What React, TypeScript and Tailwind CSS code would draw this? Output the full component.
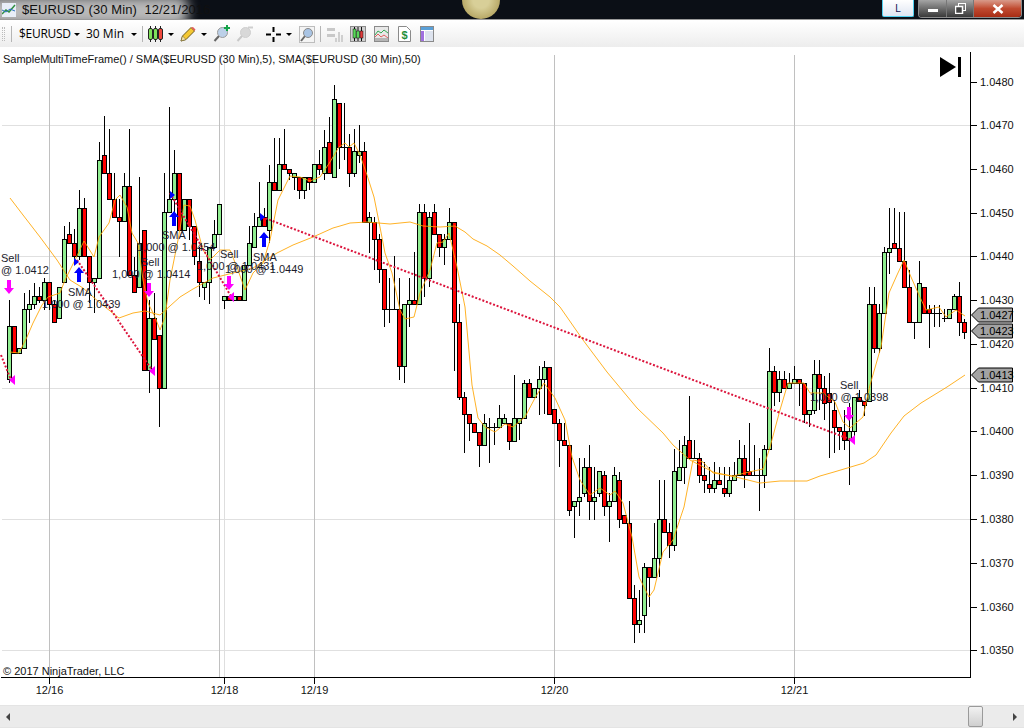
import React from "react";

type Bar = [string, number, number, number, number];

// c, body top, body bottom, high, low (all in page pixels)
const bars: Bar[] = [
  ["g",326,379,300,383],["r",326,353,326,353],["g",348,353,348,353],["g",309,348,293,348],["g",304,309,290,323],
  ["g",296,304,283,309],["r",296,300,287,303],["g",282,300,278,310],["r",282,304,282,310],["r",304,322,300,322],
  ["g",287,318,287,318],["g",239,282,226,282],["r",234,243,222,243],["r",243,256,229,263],["g",208,256,190,260],
  ["r",208,256,198,256],["r",256,282,256,303],["g",278,282,278,313],["g",160,278,142,278],["r",155,173,116,173],
  ["r",173,199,129,199],["r",199,217,173,217],["r",217,221,199,257],["g",186,221,173,221],["r",186,275,129,275],
  ["r",275,292,257,292],["g",243,287,177,287],["r",230,370,230,370],["g",318,370,300,393],["r",318,339,293,339],
  ["r",335,388,335,427],["g",212,388,173,388],["g",199,212,107,212],["g",173,199,150,212],["r",173,230,173,230],
  ["g",199,230,199,230],["r",199,226,199,240],["r",226,256,226,265],["r",261,282,247,297],["g",282,287,282,300],
  ["g",247,282,247,304],["g",234,247,220,247],["g",204,234,204,234],["g",296,300,296,309],["r",296,300,296,300],
  ["g",296,300,296,300],["r",296,300,296,300],["g",265,300,265,300],["g",243,265,226,265],["g",226,247,213,247],
  ["g",217,226,182,226],["r",217,226,208,226],["g",182,230,165,243],["r",182,190,138,190],["g",164,190,138,190],
  ["r",164,169,129,169],["r",169,173,169,180],["g",173,177,173,190],["r",177,190,177,199],["g",177,190,177,199],
  ["r",177,182,177,190],["g",164,182,164,182],["r",164,169,150,175],["g",147,173,130,180],["r",142,173,117,173],
  ["g",99,177,85,177],["r",103,147,103,169],["d",147,147,103,160],["r",147,173,134,187],["g",151,173,129,177],
  ["g",151,155,125,163],["r",151,222,142,222],["g",217,222,212,253],["r",222,239,217,270],["r",239,269,234,283],
  ["r",269,309,269,327],["d",309,309,278,323],["d",309,309,256,309],["r",309,366,278,380],["g",304,366,304,383],
  ["g",300,304,278,327],["r",300,304,252,304],["g",212,304,204,304],["r",212,278,204,297],["g",217,278,212,287],
  ["r",212,234,204,234],["r",234,247,234,257],["g",239,247,234,265],["g",222,239,208,239],["r",222,322,222,371],
  ["r",322,397,304,400],["r",397,414,392,453],["r",414,423,414,441],["r",423,432,423,432],["r",432,445,432,467],
  ["g",423,445,414,445],["d",427,427,418,463],["d",427,427,423,445],["g",418,427,405,427],["g",418,423,414,423],
  ["r",423,441,423,450],["g",418,441,375,441],["g",418,423,418,440],["g",383,418,380,418],["r",383,397,379,397],
  ["g",388,397,388,397],["g",379,388,366,415],["g",367,379,361,414],["r",367,414,367,414],["r",409,423,409,423],
  ["r",423,440,419,467],["r",440,445,423,445],["r",445,510,445,516],["g",501,506,501,538],["g",497,501,458,516],
  ["g",467,493,458,497],["r",467,501,445,520],["g",497,501,467,520],["g",471,493,471,497],["r",475,506,471,516],
  ["g",501,506,493,542],["g",475,501,467,501],["r",480,519,472,528],["r",515,523,515,523],["r",523,598,501,598],
  ["r",598,624,585,643],["g",620,624,590,633],["g",567,615,563,633],["r",567,577,567,607],["g",558,577,523,577],
  ["g",519,558,480,577],["r",519,532,480,532],["r",532,545,523,558],["g",471,545,449,551],["g",467,480,440,480],
  ["g",445,467,436,484],["r",440,458,396,458],["d",458,458,440,458],["r",458,475,453,483],["r",475,480,462,493],
  ["r",484,488,467,493],["g",480,488,462,493],["r",480,484,467,484],["r",488,493,467,497],["g",480,493,467,497],
  ["g",475,480,462,480],["g",458,475,440,475],["r",458,475,445,488],["r",471,475,423,475],["d",475,475,445,475],
  ["d",475,475,458,511],["g",449,475,445,488],["g",371,449,348,449],["r",371,392,366,406],["g",379,392,371,402],
  ["r",379,388,371,388],["g",383,388,373,388],["g",379,383,366,383],["r",379,383,379,406],["r",383,414,383,423],
  ["g",410,414,410,427],["g",374,410,360,414],["r",374,388,360,410],["r",388,403,376,420],["r",393,402,373,458],
  ["r",410,427,400,453],["r",427,431,427,450],["r",431,440,410,450],["g",431,440,403,485],["g",397,431,397,443],
  ["r",397,401,390,401],["r",401,405,401,416],["g",304,401,287,401],["r",304,348,287,353],["g",313,348,304,353],
  ["g",252,313,247,313],["g",248,252,208,274],["r",243,248,208,248],["r",248,261,212,261],["r",261,287,212,287],
  ["r",287,322,270,322],["d",322,322,322,339],["g",283,322,261,322],["r",287,313,287,313],["r",309,313,305,348],
  ["d",313,313,305,327],["d",313,313,305,327],["d",318,318,309,322],["g",309,318,309,318],["g",296,309,294,309],
  ["r",296,322,282,336],["r",322,332,319,339],
];

const sma5 = "10,352 19,353 27,337 33,323 42,305 48,297 60,293 65,280 75,260 84,241 94,257 99,237 109,223 115,200 120,195 127,207 132,233 138,243 143,280 148,303 155,317 160,330 165,317 170,280 178,240 184,205 190,206 195,220 203,250 210,260 220,250 230,250 238,270 245,290 253,273 263,263 270,240 278,200 290,176 300,177 310,181 320,177 330,162 339,147 345,143 349,147 354,143 360,155 367,175 374,197 379,222 385,253 392,273 400,310 405,319 414,317 420,293 430,270 437,243 443,242 449,233 457,267 465,307 472,385 478,418 485,427 495,432 505,424 513,427 525,417 535,398 544,383 555,398 565,420 572,457 580,480 590,495 600,488 610,495 615,491 623,503 632,537 639,577 649,597 654,590 663,552 673,540 684,507 693,460 703,462 713,473 733,476 749,472 763,469 770,447 780,410 788,383 804,383 810,393 823,393 835,402 843,422 850,428 863,417 870,385 881,347 889,293 897,275 904,260 911,277 919,295 926,310 939,307 946,317 956,310 965,316";
const sma50 = "10,198 23,215 40,237 57,260 70,280 83,288 100,303 119,318 133,313 145,311 160,315 180,297 193,289 213,278 233,273 253,268 277,253 293,245 313,237 333,228 340,226 350,223 367,222 390,224 410,222 423,226 440,227 455,226 465,232 473,239 487,246 500,255 513,266 530,281 550,297 560,307 583,340 607,372 637,408 663,433 673,445 690,460 713,472 740,478 760,483 780,481 807,481 820,476 834,472 864,463 876,455 891,433 904,416 921,403 947,387 965,375";

const trades = [[1,355,11,380],[77,260,152,370],[170,193,232,298],[262,217,852,440]];
const prices = [[1.048,82],[1.047,125],[1.046,169],[1.045,213],[1.044,256],[1.043,300],[1.042,344],[1.041,388],[1.04,431],[1.039,475],[1.038,519],[1.037,563],[1.036,607],[1.035,650]];
const grid = [125,256,388,519,650];
const dates = [["12/16",49],["12/18",224],["12/19",314],["12/20",554],["12/21",794]] as [string, number][];
const labels = [
  ["Sell",1,262],["@ 1.0412",1,274],["SMA",68,296],["1,000 @ 1.0439",42,308],["Sell",141,266],["1,000 @ 1.0414",112,278],
  ["SMA",162,239],["1,000 @ 1.0454",137,251],["Sell",220,258],["1,000 @ 1.0431",197,270],["SMA",253,261],["1,000 @ 1.0449",225,273],
  ["Sell",840,389],["1,000 @ 1.0398",810,401],
] as [string, number, number][];
const sellArrows = [[9,280],[149,283],[229,276],[849,407]];
const buyArrows = [[79,267],[174,211],[264,232]];
const flags = [[1.0427,308],[1.0423,324],[1.0413,368]];

function Caret() {
  return <span className="mx-[5px] h-0 w-0 border-x-[3px] border-t-[3px] border-x-transparent border-t-black" />;
}

function Sep() {
  return <span className="mx-[5px] h-[16px] w-px bg-[#b5b5b5]" />;
}

function Lens({ gray, plus }: { gray?: boolean; plus?: boolean }) {
  return (
    <svg width="18" height="18" viewBox="0 0 18 18">
      <line x1="1.5" y1="16" x2="6" y2="11" stroke={gray ? "#c8c8c8" : "#666"} strokeWidth="2" />
      <circle cx="9.5" cy="7.5" r="5" fill={gray ? "#d8d8d8" : "#bcd0e8"} stroke={gray ? "#cfcfcf" : "#9a9a9a"} />
      {plus && <path d="M14 0v6M11 3h6" stroke="#16a34a" strokeWidth="2" />}
      {gray && <path d="M12 2.500h5" stroke="#cfcfcf" strokeWidth="2" />}
    </svg>
  );
}

function Toolbar() {
  return (
    <div className="flex h-[26px] items-center bg-gradient-to-b from-white to-[#ededed] pl-[2px] text-[12px] text-black [font-family:'Open_Sans','Noto_Sans',sans-serif]">
      <span className="h-[14px] w-[3px] border-x border-dotted border-[#bbb]" />
      <span className="ml-[6px] mr-[7px] h-[16px] w-px bg-[#b5b5b5]" />
      <span className="w-[50px] tracking-[-0.3px]">$EURUSD</span>
      <Caret />
      <span className="ml-[1px] w-[40px]">30 Min</span>
      <Caret />
      <span className="ml-[0px] mr-[5px] h-[16px] w-px bg-[#b5b5b5]" />
      <svg width="15" height="16" viewBox="0 0 15 16">
        <path d="M2.500 0v16M7.500 0v16M12.500 0v16" stroke="#222" />
        <rect x="0.500" y="2.500" width="4" height="11" rx="1.500" fill="#7fe05a" stroke="#222" />
        <rect x="5.500" y="2.500" width="4" height="11" rx="1.500" fill="#7fe05a" stroke="#222" />
        <rect x="10.500" y="2.500" width="4" height="11" rx="1.500" fill="#f0483c" stroke="#222" />
      </svg>
      <Caret />
      <svg className="ml-[1px]" width="16" height="16" viewBox="0 0 16 16">
        <path d="M1 15l1.500-5L11 1.500l3.500 3.500L6 13.500z" fill="#f5c832" stroke="#6b5a1e" />
        <path d="M1 15l1.500-5 3.500 3.500z" fill="#f3e3b0" stroke="#6b5a1e" strokeWidth="0.500" />
        <path d="M11 1.500l3.500 3.500 1-1.500L13 1z" fill="#e25c5c" />
      </svg>
      <Caret />
      <span className="ml-[1px]"><Lens plus /></span>
      <span className="ml-[5px]"><Lens gray /></span>
      <span className="ml-[2px]"><Sep /></span>
      <svg className="ml-[0px]" width="15" height="15" viewBox="0 0 15 15">
        <path d="M7.500 0v5M7.500 10v5M0 7.500h5M10 7.500h5" stroke="#000" strokeWidth="2" />
      </svg>
      <Caret />
      <span className="relative ml-[2px] flex h-[17px] w-[16px] items-center justify-center border border-[#bdbdbd] bg-[#f4f4f4]">
        <svg width="14" height="15" viewBox="0 0 14 15">
          <line x1="1" y1="14" x2="5" y2="9" stroke="#666" strokeWidth="2" />
          <circle cx="8" cy="6" r="4.500" fill="#a9c4e4" stroke="#8a8a8a" />
        </svg>
      </span>
      <Sep />
      <svg className="ml-[1px]" width="16" height="17" viewBox="0 0 16 17">
        <path d="M0 2h8v3H0zM0 8h8v3H0z" fill="#c8c8c8" />
        <path d="M11 6h2v10h-2zM8 12h2v4H8zM14 9h2v7h-2z" fill="#cfcfcf" />
      </svg>
      <span className="ml-[7px] flex h-[16px] w-[16px] items-center justify-center border border-[#8a8a8a] bg-[#cfcfcf]">
        <svg width="14" height="14" viewBox="0 0 14 14">
          <path d="M3.500 0v14M7 0v14M10.500 0v14" stroke="#111" />
          <rect x="2" y="2" width="3" height="9" fill="#58d858" stroke="#111" strokeWidth="0.500" />
          <rect x="5.500" y="4" width="3" height="7" fill="#58d858" stroke="#111" strokeWidth="0.500" />
          <rect x="9" y="4" width="3" height="7" fill="#e03a3a" stroke="#111" strokeWidth="0.500" />
        </svg>
      </span>
      <span className="ml-[8px] flex h-[16px] w-[15px] items-end border border-[#8a8a8a] bg-[#e8e8e8]">
        <svg width="13" height="14" viewBox="0 0 13 14">
          <path d="M0 8l3-4 3 2 3-3 4 3" fill="none" stroke="#34a853" />
          <path d="M0 10l3-3 3 3 3-2 4 3" fill="none" stroke="#e06060" />
          <rect y="11" width="13" height="3" fill="#b5b5b5" />
        </svg>
      </span>
      <svg className="ml-[9px]" width="13" height="16" viewBox="0 0 13 16">
        <path d="M.5.500h8l4 4v11H.5z" fill="#fff" stroke="#8a8a8a" />
        <text x="6.500" y="13" textAnchor="middle" fontSize="11" fontWeight="700" fill="#1f8f3a" fontFamily="Liberation Sans">$</text>
      </svg>
      <span className="ml-[9px] flex h-[16px] w-[14px] flex-col border border-[#8a8a8a] bg-white">
        <span className="h-[3px] bg-[#5aa0d8]" />
        <span className="mt-[1px] flex flex-1">
          <span className="w-[3px] bg-[#a070e0]" />
          <span className="ml-[1px] flex-1 bg-[#dde3ee]" />
        </span>
      </span>
    </div>
  );
}

function Chart() {
  return (
    <svg className="block" width="1024" height="658" viewBox="0 47 1024 658" fontFamily="Liberation Sans, sans-serif" fontSize="11">
      <rect x="0" y="47" width="1024" height="658" fill="#fff" />
      {grid.map((y) => (
        <line key={y} x1="2" x2="970" y1={y + 0.5} y2={y + 0.5} stroke="#e0e0e0" />
      ))}
      {[49, 219, 314, 554, 794].map((x) => (
        <line key={x} x1={x + 0.5} x2={x + 0.5} y1="55" y2="677" stroke="#c0c0c0" />
      ))}
      <line x1="224.500" x2="224.500" y1="55" y2="677" stroke="#dedede" />

      {bars.map(([c, top, bot, hi, lo], i) => {
        const x = 9.5 + i * 5;
        return (
          <g key={i} shapeRendering="crispEdges">
            <line x1={x} x2={x} y1={hi} y2={lo} stroke="#000" />
            {c === "d" ? (
              <line x1={x - 2.5} x2={x + 2.5} y1={top + 0.5} y2={top + 0.5} stroke="#000" />
            ) : (
              <rect x={x - 2} y={top + 0.5} width="4" height={bot - top} fill={c === "g" ? "#90ee90" : "#ff0000"} stroke="#000" />
            )}
          </g>
        );
      })}

      <polyline points={sma50} fill="none" stroke="#ffa500" strokeOpacity="0.85" />
      <polyline points={sma5} fill="none" stroke="#ffa500" strokeOpacity="0.85" />

      {trades.map(([a, b, c, d], i) => (
        <line key={i} x1={a} y1={b} x2={c} y2={d} stroke="#dc143c" strokeWidth="2" strokeDasharray="2 1.800" />
      ))}

      {labels.map(([t, x, y], i) => (
        <text key={i} x={x} y={y} fill="#1c1c2c">{t}</text>
      ))}

      {sellArrows.map(([x, y]) => (
        <path key={x} d={`M${x - 2} ${y}h4v8h3l-5 6-5-6h3z`} fill="#ff00ff" />
      ))}
      {buyArrows.map(([x, y]) => (
        <path key={x} d={`M${x - 2} ${y + 15}v-9h-3l5-6 5 6h-3v9z`} fill="#0000ff" />
      ))}
      {[[9,380],[149,371],[228,297],[849,440]].map(([x, y]) => (
        <path key={x} d={`M${x} ${y}l6-5v10z`} fill="#ff00ff" />
      ))}
      {[[74,262],[170,195],[260,217]].map(([x, y]) => (
        <path key={x} d={`M${x} ${y - 4}l5 4-5 4z`} fill="#0000ff" />
      ))}

      <text x="3" y="63" fill="#111">SampleMultiTimeFrame() / SMA($EURUSD (30 Min),5), SMA($EURUSD (30 Min),50)</text>
      <text x="3" y="675" fill="#111">© 2017 NinjaTrader, LLC</text>

      <path d="M940 57l16 10-16 10z" fill="#000" />
      <rect x="958" y="57" width="3" height="20" fill="#000" />

      <g shapeRendering="crispEdges">
        <line x1="970.500" x2="970.500" y1="52" y2="677" stroke="#000" />
        <line x1="1" x2="971" y1="677.500" y2="677.500" stroke="#000" />
        {prices.map(([p, y]) => (
          <line key={p} x1="971" x2="977" y1={y + 0.5} y2={y + 0.5} stroke="#000" />
        ))}
        {dates.map(([d, x]) => (
          <line key={d} x1={x + 0.5} x2={x + 0.5} y1="677" y2="684" stroke="#000" />
        ))}
      </g>
      {prices.map(([p, y]) => (
        <text key={p} x="980" y={y + 4} fill="#111">{p.toFixed(4)}</text>
      ))}
      {dates.map(([d, x]) => (
        <text key={d} x={x + 0.5} y="694" textAnchor="middle" fill="#111">{d}</text>
      ))}
      {flags.map(([p, y]) => (
        <g key={p}>
          <path d={`M971.500 ${y + 7}l7-7h34v14h-34z`} fill="#a3a3a3" stroke="#000" />
          <text x="980" y={y + 11} fill="#000">{p.toFixed(4)}</text>
        </g>
      ))}
    </svg>
  );
}

export default function App() {
  return (
    <div className="flex h-[728px] w-[1024px] flex-col overflow-hidden bg-white [font-family:'Liberation_Sans',sans-serif]">
      {/* Title bar */}
      <div className="relative flex h-[20px] items-center overflow-hidden border-b border-[#9a9a9a] bg-[#0b0f16]">
        <div className="absolute -left-[12px] -top-[4px] h-[30px] w-[200px] rounded-[10px] bg-[#b9b9b9] blur-[6px]" />
        <div className="absolute -top-[19px] left-[462px] h-[38px] w-[38px] rounded-full bg-[radial-gradient(circle,#d8cf98_30%,#a8964f_90%)]" />
        <svg className="relative ml-[2px]" width="14" height="14" viewBox="0 0 14 14">
          <rect width="14" height="14" fill="#e8eef8" />
          <path d="M0 11l4-4 3 2 6-7" fill="none" stroke="#2f8f3f" strokeWidth="1.500" />
          <path d="M0 7l4 2 4-3 5 2" fill="none" stroke="#2a6fc0" />
        </svg>
        <span className="relative ml-[6px] whitespace-pre text-[13px] tracking-[0.1px] text-[#101010]">$EURUSD (30 Min)  12/21/2016</span>
        <div className="absolute right-[110px] top-0 flex h-[17px] w-[32px] items-center justify-center rounded-b-[2px] border border-t-0 border-[#4fd0f0] bg-gradient-to-b from-white to-[#dfe6f2] text-[10px] text-[#101050]">L</div>
        <div className="absolute right-[2px] top-0 flex h-[18px] w-[104px] overflow-hidden rounded-b-[4px] border border-t-0 border-[#8d8d8d]">
          <div className="flex w-[28px] items-center justify-center border-r border-[#777] bg-gradient-to-b from-[#a5a5a5] to-[#3a3a3a]">
            <span className="mt-[3px] h-[3px] w-[10px] bg-white" />
          </div>
          <div className="flex w-[27px] items-center justify-center border-r border-[#777] bg-gradient-to-b from-[#a5a5a5] to-[#3a3a3a]">
            <svg width="11" height="11" viewBox="0 0 11 11">
              <rect x="3.500" y="0.500" width="7" height="7" fill="none" stroke="#fff" />
              <rect x="0.500" y="3.500" width="7" height="7" fill="#444" stroke="#fff" strokeWidth="1.500" />
            </svg>
          </div>
          <div className="flex flex-1 items-center justify-center bg-gradient-to-b from-[#d89a8a] via-[#c04a30] to-[#a82c14]">
            <svg width="12" height="10" viewBox="0 0 12 10">
              <path d="M1.500 1l9 8M10.500 1l-9 8" stroke="#fff" strokeWidth="2.500" />
            </svg>
          </div>
        </div>
      </div>
      <div className="h-px bg-white" />
      <Toolbar />
      <Chart />
      {/* Scrollbar */}
      <div className="relative flex h-[23px] items-center justify-between border-y border-[#e4e4e4] bg-[#ebebeb] px-[6px]">
        <span className="h-0 w-0 border-y-[4px] border-r-[4px] border-y-transparent border-r-[#444]" />
        <span className="absolute left-[968px] top-0 h-[21px] w-[15px] rounded-[2px] border border-[#9a9a9a] bg-gradient-to-b from-[#f2f2f2] to-[#cfcfcf]" />
        <span className="mr-[1px] h-0 w-0 border-y-[4px] border-l-[4px] border-y-transparent border-l-[#444]" />
      </div>
    </div>
  );
}
